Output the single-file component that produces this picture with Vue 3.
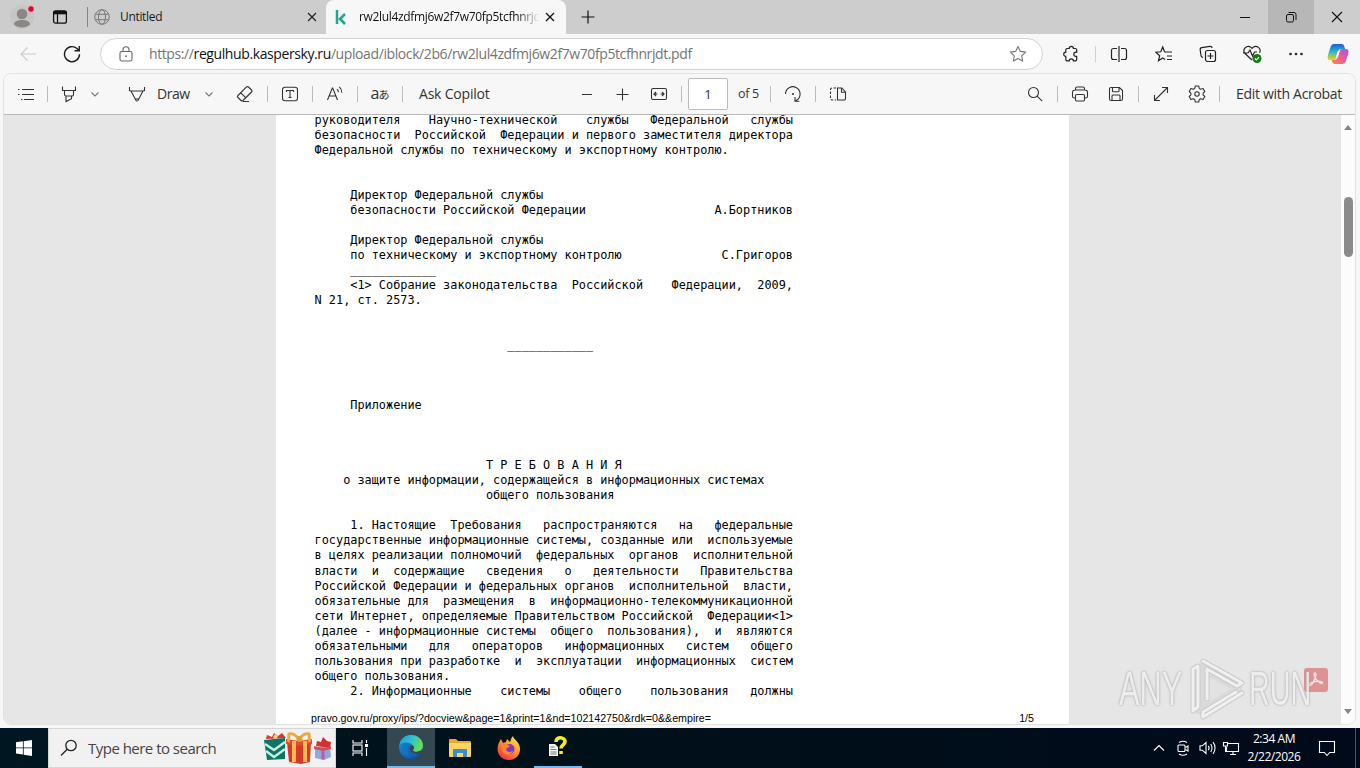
<template>
  <div class="screen">
    <header class="tabs">
      <div class="profile">
        <svg width="26" height="34" viewBox="0 0 26 34">
          <circle cx="13" cy="17" r="12" fill="#c8c6c4" />
          <circle cx="13" cy="14" r="5.3" fill="#8b8784" />
          <path d="M5 24.5c0-3 3-4.500 8-4.500s8 1.500 8 4.500c-2 2-5 3-8 3s-6-1-8-3z" fill="#8b8784" />
          <circle cx="22" cy="9" r="3.400" fill="#d3102b" stroke="#e6cfd1" />
        </svg>
      </div>
      <svg class="tab-actions" width="16" height="16" viewBox="0 0 16 16" fill="none" stroke="#111" stroke-width="1.300">
        <rect x="1.600" y="1.800" width="12.800" height="12.400" rx="2" />
        <path d="M1.600 3.600h12.800" stroke-width="3.400" />
        <path d="M5.500 4v10" />
      </svg>
      <i class="tab-line"></i>
      <div class="tab">
        <svg width="16" height="16" viewBox="0 0 16 16" fill="none" stroke="#777" stroke-width="1">
          <circle cx="8" cy="8" r="7.300" />
          <ellipse cx="8" cy="8" rx="3.500" ry="7.300" />
          <path d="M1.500 5.300h13M1.500 10.700h13" />
        </svg>
        <span class="tab-title first">Untitled</span>
        <svg class="close" width="10" height="10" viewBox="0 0 10 10"><path d="M1 1l8 8M9 1l-8 8" stroke="#222" stroke-width="1.200" /></svg>
      </div>
      <div class="tab active">
        <svg width="12" height="16" viewBox="0 0 12 16" fill="none" stroke="#1fa88f" stroke-width="2.500">
          <path d="M2 1v14M10 5L5 10l5 5M4 10h2" />
        </svg>
        <span class="tab-title second">rw2lul4zdfmj6w2f7w70fp5tcfhnrjdt.pdf</span>
        <svg class="close" width="10" height="10" viewBox="0 0 10 10"><path d="M1 1l8 8M9 1l-8 8" stroke="#111" stroke-width="1.300" /></svg>
      </div>
      <svg class="new-tab" width="14" height="14" viewBox="0 0 14 14"><path d="M7 .5v13M.5 7h13" stroke="#111" stroke-width="1.200" /></svg>
      <div class="window-buttons">
        <span><svg width="12" height="12" viewBox="0 0 12 12"><path d="M1 6.500h10" stroke="#111" /></svg></span>
        <span class="hover">
          <svg width="12" height="12" viewBox="0 0 12 12" fill="none" stroke="#111"><rect x="1.500" y="3.500" width="7" height="7.500" rx="1.500" /><path d="M3.500 1.500h5.500a2 2 0 0 1 2 2V9" /></svg>
        </span>
        <span><svg width="12" height="12" viewBox="0 0 12 12"><path d="M1 1l10 10M11 1L1 11" stroke="#111" stroke-width="1.100" /></svg></span>
      </div>
    </header>

    <nav class="address-row">
      <svg class="back" width="18" height="16" viewBox="0 0 18 16" fill="none" stroke="#ccc" stroke-width="1.200"><path d="M17 8H2M8.500 1.500L2 8l6.500 6.500" /></svg>
      <svg class="reload" width="18" height="18" viewBox="0 0 18 18" fill="none" stroke="#1d1d1d" stroke-width="1.400"><path d="M16.500 9.200A7.500 7.500 0 1 1 14 3.600L16 5.500M16.300 1v4.700h-4.800" /></svg>
      <div class="address">
        <svg width="14" height="16" viewBox="0 0 14 16" fill="none" stroke="#666" stroke-width="1.100">
          <rect x="1" y="5.500" width="12" height="9.500" rx="1.800" /><path d="M4 5.500V3.800a3 3 0 0 1 6 0v1.700" /><circle cx="7" cy="10.200" r=".9" fill="#666" stroke="none" />
        </svg>
        <span class="url">https://<b>regulhub.kaspersky.ru</b>/upload/iblock/2b6/rw2lul4zdfmj6w2f7w70fp5tcfhnrjdt.pdf</span>
        <svg class="star" width="18" height="18" viewBox="0 0 18 18" fill="none" stroke="#777" stroke-width="1.100"><path d="M9 1.500l2.300 4.900 5.300.7-3.900 3.700 1 5.300L9 13.500l-4.700 2.600 1-5.300-3.900-3.700 5.300-.7z" stroke-linejoin="round" /></svg>
      </div>
      <div class="browser-tools">
        <svg class="puzzle" width="18" height="18" viewBox="0 0 18 18"><path d="M5.300 3.500h1.900a2.100 2.100 0 0 1 4.200 0h1.800a1.500 1.500 0 0 1 1.500 1.500v2.200h-.8a2.100 2.100 0 0 0 0 4.200h.8v3a1.500 1.500 0 0 1-1.500 1.500h-1.800a2.100 2.100 0 0 0-4.200 0H5.300a1.500 1.500 0 0 1-1.500-1.500v-3a2.100 2.100 0 0 1 0-4.200V5a1.500 1.500 0 0 1 1.500-1.500z" /></svg>
        <i></i>
        <svg class="split" width="18" height="18" viewBox="0 0 18 18"><path d="M7 3.500H3.500a2 2 0 0 0-2 2v7a2 2 0 0 0 2 2H7M11 3.500h3.500a2 2 0 0 1 2 2v7a2 2 0 0 1-2 2H11M9 1v16" /></svg>
        <svg class="favs" width="18" height="18" viewBox="0 0 18 18"><path d="M10 7H17M12 11h5M12 14.500h5M9.500 6.800L7.700 2 5.800 6.800l-5 .4 3.900 3.500-1.200 5L7.700 13l2.400 1.500M9.500 7l1 .2" /></svg>
        <svg class="collections" width="18" height="18" viewBox="0 0 18 18"><rect x="6.500" y="5.500" width="10" height="11" rx="2" /><path d="M11.500 8v6M8.500 11h6M4 12.500l-1-.5a2 2 0 0 1-1-1.500L1.200 5a2 2 0 0 1 1.600-2.300L11 1.300c1-.1 1.800.4 2.200 1.700" /></svg>
        <svg class="health" width="20" height="20" viewBox="0 0 20 20"><path d="M10 16L3 9.500A4.300 4.300 0 0 1 9 3.400l1 1 1-1a4.300 4.300 0 0 1 6.500 5.400M1 9h5l2-3 2.500 6L12.500 8H15" /><circle cx="15" cy="14.500" r="4.500" fill="#107c10" stroke="none" /><path d="M12.900 14.500l1.500 1.500 2.700-2.900" stroke="#fff" /></svg>
        <svg class="dots" width="16" height="4" viewBox="0 0 16 4"><g fill="#222" stroke="none"><circle cx="2.500" cy="2" r="1.300" /><circle cx="8" cy="2" r="1.300" /><circle cx="13.500" cy="2" r="1.300" /></g></svg>
        <svg class="copilot" width="22" height="22" viewBox="0 0 22 22">
          <defs>
            <linearGradient id="cool" x1="0" y1="0" x2="0" y2="1"><stop offset="0" stop-color="#1b62d4" /><stop offset=".5" stop-color="#2cb7d0" /><stop offset=".8" stop-color="#a7cc45" /><stop offset="1" stop-color="#ffcc16" /></linearGradient>
            <linearGradient id="warm" x1="1" y1="0" x2="0" y2="1"><stop offset="0" stop-color="#a455e8" /><stop offset=".5" stop-color="#ed5c93" /><stop offset="1" stop-color="#fb8744" /></linearGradient>
          </defs>
          <g stroke="none">
            <path d="M8 1h7c2 0 2.500 3 3.200 5H14c-1.800 0-2.300 1-2.800 2.500L9 15c-.5 1.500-1 2-3 2H3c-3 0-2.500-3.500-1.600-6.500L3.500 4C4.500 1.500 5.500 1 8 1z" fill="url(#cool)" />
            <path d="M14 21H8c-2 0-2.700-2-3.500-4H7c2 0 2.700-.7 3.200-2.500L12.500 8c.5-1.500 1.500-2 3-2H19c3 0 2.800 3 1.900 6l-2 6c-1 2.500-2.500 3-4.900 3z" fill="url(#warm)" />
            <path d="M10.800 8h2l-1.900 6.500H8.800z" fill="#fff" />
          </g>
        </svg>
      </div>
    </nav>

    <main class="viewer">
      <div class="toolbar">
        <span class="tool first"><svg width="18" height="16" viewBox="0 0 18 16"><path d="M5 3.500h12M5 8.500h12M7 13.500h10M1 3.500h1.500M1 8.500h1.500M4 13.500h1.500" /></svg></span>
        <i class="sep narrow"></i>
        <span class="tool"><svg width="16" height="18" viewBox="0 0 16 18"><path d="M1.500 1.500v4h13v-4M3.500 5.500v4a1.500 1.500 0 0 0 1.500 1.500h6a1.500 1.500 0 0 0 1.500-1.500v-4M5 11v5.500l5.500-2.800V11" /></svg></span>
        <span class="chevron"><svg width="8" height="5" viewBox="0 0 8 5"><path d="M.5.5L4 4 7.500.5" /></svg></span>
        <span class="tool pen"><svg width="18" height="18" viewBox="0 0 18 18"><path d="M1.500 2v3.500l1.500.500h12l1.500-.5V2M3 6l5 9.500c.4.700 1.600.7 2 0L15 6M7.500 14h3" /></svg></span>
        <span class="label draw">Draw</span>
        <span class="chevron short"><svg width="8" height="5" viewBox="0 0 8 5"><path d="M.5.5L4 4 7.500.5" /></svg></span>
        <span class="tool eraser"><svg width="18" height="18" viewBox="0 0 18 18"><path d="M10.300 2.200L2 10.500c-.7.7-.7 1.300 0 2l3 3c.7.700 1.300.7 2 0l8.500-8.500c.7-.7.7-1.300 0-2l-3-3c-.7-.6-1.500-.6-2.200.2zM4.800 7.800l5.300 5.300M7 16.500h6" /></svg></span>
        <i class="sep"></i>
        <span class="tool"><svg width="18" height="16" viewBox="0 0 18 16"><rect x="1.500" y="1.200" width="15" height="13.500" rx="2.500" /><path d="M5.500 6V4.500h7V6M9 4.500v7M7.500 11.500h3" /></svg></span>
        <i class="sep"></i>
        <span class="tool"><svg width="18" height="18" viewBox="0 0 18 18"><path d="M1.500 15L6.300 3h.4l4.800 12M3.200 11h6.600M11 4.200c1 .8 1.400 1.800 1.400 3M13.200 1.800c1.800 1.500 2.600 3.400 2.600 5.900" /></svg></span>
        <i class="sep"></i>
        <span class="tool translate">a<small>あ</small></span>
        <i class="sep"></i>
        <span class="label ask">Ask Copilot</span>
        <span class="tool minus"><svg width="12" height="12" viewBox="0 0 12 12"><path d="M1 6.500h10" /></svg></span>
        <span class="tool plus"><svg width="13" height="13" viewBox="0 0 13 13"><path d="M.5 6.500h12M6.500.5v12" /></svg></span>
        <span class="tool fit"><svg width="18" height="14" viewBox="0 0 18 14"><rect x="1.500" y="1.500" width="15" height="11" rx="1.500" /><path d="M4 7h3.500M10.500 7H14M6 5L4 7l2 2M12 5l2 2-2 2" /></svg></span>
        <i class="sep slim"></i>
        <span class="page-input">1</span>
        <span class="label of">of 5</span>
        <i class="sep"></i>
        <span class="tool"><svg width="18" height="18" viewBox="0 0 18 18"><path d="M1.500 9a7.300 7.300 0 1 1 11 6.300l-1 .6M11 12v4.300h4.300" /><circle cx="9" cy="9" r="1.100" fill="#333" stroke="none" /></svg></span>
        <i class="sep"></i>
        <span class="tool"><svg width="18" height="16" viewBox="0 0 18 16"><path d="M8.500 2h4.300L16.500 6v6.500a1.500 1.500 0 0 1-1.500 1.500H8.500zM12.500 2v4.200h4" /><path d="M7 2H3a1.500 1.500 0 0 0-1.500 1.500v9A1.500 1.500 0 0 0 3 14h4" stroke-dasharray="2.500 1.500" /></svg></span>
        <span class="tool search"><svg width="16" height="16" viewBox="0 0 16 16"><circle cx="6.500" cy="6.500" r="5" /><path d="M10.200 10.200l5 5" /></svg></span>
        <i class="sep"></i>
        <span class="tool"><svg width="18" height="18" viewBox="0 0 18 18"><path d="M4.500 13H3.300a1.800 1.800 0 0 1-1.800-1.800V7.500A2.500 2.500 0 0 1 4 5h10a2.500 2.500 0 0 1 2.500 2.500v3.700a1.800 1.800 0 0 1-1.800 1.800h-1.200M4.500 5V3.500A1.500 1.500 0 0 1 6 2h6a1.500 1.500 0 0 1 1.500 1.500V5" /><rect x="4.500" y="9.500" width="9" height="6.500" rx="1.200" /></svg></span>
        <span class="tool gap"><svg width="16" height="16" viewBox="0 0 16 16"><path d="M3 1.500h8.500l3 3V13a1.500 1.500 0 0 1-1.500 1.500H3A1.500 1.500 0 0 1 1.500 13V3A1.500 1.500 0 0 1 3 1.500zM4.500 1.500V5a.8.8 0 0 0 .8.800h4.900A.8.8 0 0 0 11 5V1.500M4 14.500V10a1 1 0 0 1 1-1h6a1 1 0 0 1 1 1v4.500" /></svg></span>
        <i class="sep"></i>
        <span class="tool"><svg width="16" height="16" viewBox="0 0 16 16"><path d="M1.500 14.500l13-13M9 1.500h5.500V7M1.500 9v5.500H7" /></svg></span>
        <span class="tool gap"><svg width="18" height="18" viewBox="0 0 18 18"><path d="M7.300 1h3.400l.6 2.400 1.400.8 2.400-.7 1.700 3L15.100 8.200v1.600l1.700 1.700-1.700 3-2.400-.7-1.400.8-.6 2.400H7.300l-.6-2.400-1.400-.8-2.400.7-1.700-3 1.700-1.700V8.200L1.200 6.500l1.700-3 2.400.7 1.400-.8z" stroke-linejoin="round" /><circle cx="9" cy="9" r="2.200" /></svg></span>
        <i class="sep"></i>
        <span class="label edit">Edit with Acrobat</span>
      </div>
      <div class="document">
        <div class="canvas">
          <article class="page">
            <pre>{{ pageText }}</pre>
            <footer><span>pravo.gov.ru/proxy/ips/?docview&amp;page=1&amp;print=1&amp;nd=102142750&amp;rdk=0&amp;&amp;empire=</span><span>1/5</span></footer>
          </article>
        </div>
        <div class="scrollbar"><i class="up"></i><b></b><i class="down"></i></div>
      </div>
      <div class="acrobat"><svg width="20" height="20" viewBox="0 0 20 20" fill="none" stroke="#f7e3e3" stroke-width="1.400"><path d="M9 3c2 0 .5 5-1.500 9-2 3.500-4.500 4.500-4.500 3s4-3.500 8-3.700 6 .4 5.500 1.600-4-.4-6-3.200S7 3 9 3z" /></svg></div>
      <div class="watermark">
        <span>ANY</span>
        <svg width="56" height="64" viewBox="0 0 56 64" fill="none" stroke-linejoin="round" stroke-linecap="round">
          <path d="M14 3l39 22v10L14 59l-10-6V11z" fill="#d9d9d9" />
          <path d="M18 18l24 13-24 14z" fill="#e2e2e2" />
          <g stroke="#c6c6c6" stroke-width="5"><path d="M14 3l39 22-5 3-30-17v30" /><path d="M53 35L14 59v-5l33-20" /><path d="M9 8L4 11v42l5-4z" /></g>
          <g stroke="#f2f2f2" stroke-width="3"><path d="M14 3l39 22-5 3-30-17v30" /><path d="M53 35L14 59v-5l33-20" /><path d="M9 8L4 11v42l5-4z" /></g>
        </svg>
        <span class="run">RUN</span>
      </div>
    </main>

    <footer class="taskbar">
      <span class="start"><svg width="16" height="16" viewBox="0 0 16 16" fill="#fff"><path d="M0 2.300l6.900-1v6.200H0zM7.700 1.200L16 0v7.500H7.700zM0 8.300h6.900v6.300L0 13.600zM7.700 8.300H16V16l-8.300-1.200z" /></svg></span>
      <div class="search-box">
        <svg width="18" height="18" viewBox="0 0 18 18" fill="none" stroke="#222" stroke-width="1.300"><circle cx="11" cy="6.500" r="5.200" /><path d="M7.200 10.300L1 16.500" /></svg>
        <span>Type here to search</span>
        <svg class="gifts" width="70" height="36" viewBox="0 0 70 36">
          <path d="M3 9l1-4 5 2 2-4 4 3 4-3 4 5z" fill="#d53a31" />
          <path d="M10 7l2-3 3 2-2 4z" fill="#f0d27b" />
          <path d="M1 10l21-2v21L4 30z" fill="#0e7468" />
          <path d="M2 14l9 6 11-8M3 21l8 6 11-8" stroke="#c9f1df" stroke-width="2.300" fill="none" />
          <path d="M53 16l1-5 4 1 2-5 4 4 4 1-1 6z" fill="#cf3135" />
          <path d="M52 17h15l1 10-7 3-9-2z" fill="#8fa9dc" /><path d="M51 16l9 2 8-2v3l-8 2-9-2z" fill="#cc514f" /><path d="M58.500 20h3v9.500h-3z" fill="#c8549a" />
          <path d="M24 12l24-1-1 21-9 2-12-2z" fill="#d3382a" /><path d="M23 9l13 2 13-2v5l-13 2-13-2z" fill="#e24a32" /><path d="M29 11h4v21h-4zM40 11h4v21h-4z" fill="#f4bc4e" />
          <path d="M36 10c-2-5-7-7-10-6-1 2 1 5-1 8M36 10c2-5 7-7 10-6 1 2-1 5 1 8" fill="none" stroke="#e8ab42" stroke-width="3" />
          <circle cx="36.500" cy="9" r="3" fill="#dda03a" />
        </svg>
      </div>
      <span class="task"><svg width="18" height="16" viewBox="0 0 18 16" fill="none" stroke="#fff" stroke-width="1.100"><path d="M2 0v3h9V0M2 16v-3h9v3" /><rect x="2" y="5" width="9" height="6" /><path d="M15.500 0v3M15.500 8v8" /><path d="M14.500 4.500h2v2h-2z" fill="#fff" /></svg></span>
      <span class="task current">
        <svg width="24" height="24" viewBox="0 0 24 24">
          <defs>
            <linearGradient id="wave" x1="0" y1="0" x2="1" y2=".3"><stop offset="0" stop-color="#2194df" /><stop offset=".55" stop-color="#2fc2cd" /><stop offset="1" stop-color="#67dd55" /></linearGradient>
            <linearGradient id="sea" x1="0" y1="0" x2=".8" y2="1"><stop offset="0" stop-color="#1d9be6" /><stop offset="1" stop-color="#0c4c9d" /></linearGradient>
          </defs>
          <circle cx="12" cy="12" r="12" fill="url(#sea)" />
          <path d="M.5 10C1.500 4 6 0 12 0c7 0 12 5 12 10.500 0 4-3 6.500-6.500 6.500-2.500 0-4-1-3.500-2 1-1.500 1-2.500.5-3.500C13 8 8 6.500 4 8 2 8.700 1 9.500.5 10z" fill="url(#wave)" />
          <path d="M9 12c1-1.800 3-2.500 5.300-1 .7 1.500.5 2.500-.3 4-.5 1 1 2 3.500 2 2 0 3.500-.5 4.800-1.500C20 20 17 21.500 14 20.500 10 19.500 7.500 15 9 12z" fill="#1b62b4" />
          <path d="M11 12c1-1.500 2.500-1.800 3.500-.8.5 1.500.3 2.500-.5 3.800-.4 1 .8 1.900 2.800 2.100l5.500-1.600 1.200.3-1.500 2.700c-2.500 1-6 .8-8.500-.8-2.200-1.500-3.300-3.700-2.500-5.700z" fill="#33474f" />
          <path d="M3 9c5-2 9 0 9 1-4 0-6 6-1 11-5-1-9-6-8-12z" fill="#1474c4" />
        </svg>
      </span>
      <span class="task"><svg width="22" height="20" viewBox="0 0 22 20"><path d="M0 2q0-1 1-1h6l2 2h12q1 0 1 1v14H0z" fill="#e9a92c" /><path d="M0 5h22v13q0 1-1 1H1q-1 0-1-1z" fill="#fbd467" /><path d="M4 19v-7q0-1 1-1h12q1 0 1 1v7h-4v-4H8v4z" fill="#3c8ec9" /></svg></span>
      <span class="task"><svg width="24" height="24" viewBox="0 0 24 24">
        <defs><linearGradient id="fire" x1=".9" y1="0" x2=".2" y2="1"><stop offset="0" stop-color="#fff04d" /><stop offset=".45" stop-color="#ff9a27" /><stop offset="1" stop-color="#ed294f" /></linearGradient></defs>
        <path d="M4 3l2 4 3-1 1-3 3 3c1-2 1-4 3-6 0 3 6 5 7 12 .5 6-4 12-11 12S.5 19 .5 13C.5 9 2 6 4 3z" fill="url(#fire)" /><circle cx="12.500" cy="13" r="5" fill="#7a37c9" /><path d="M5 8c4-1 5 1 8 2-1 2-3 1-4 3 1 4 5 3 7 2-2 5-10 5-11-1z" fill="#ff8330" />
      </svg></span>
      <span class="task running"><svg width="20" height="22" viewBox="0 0 20 22"><path d="M8 6c0-6 9-5 9-.5 0 3.500-4 3.300-4 7M13 15v3" fill="none" stroke="#f7ee19" stroke-width="3.600" /><path d="M1 8h6l3 3v9H1z" fill="#f4f4f4" /><path d="M2.500 11h4M2.500 13.500h6M2.500 16h6M2.500 18h6" stroke="#777" /></svg></span>
      <div class="tray">
        <svg class="caret" width="12" height="8" viewBox="0 0 12 8"><path d="M1 6.500l5-5 5 5" /></svg>
        <svg class="meet" width="14" height="16" viewBox="0 0 14 16"><rect x="2" y="5" width="7" height="6.500" rx="1" /><path d="M9.500 7.500l2.500-1.500v5L9.500 9.500M3 2.500c2.300-1.500 5.700-1.500 8 0M3 14c2.300 1.500 5.700 1.500 8 0" /></svg>
        <svg class="sound" width="18" height="14" viewBox="0 0 18 14"><path d="M1 4.800h2.300L7 1.500v11L3.300 9.200H1zM9.300 4.800c.9 1.200.9 3.200 0 4.400M11.700 3c1.700 2.200 1.700 5.800 0 8M14 1.200c2.700 3.200 2.700 8.400 0 11.600" /></svg>
        <svg class="network" width="18" height="15" viewBox="0 0 18 15"><path d="M5.500 2.500h11v8H4.500V6M8 13.500h6M11 10.500v3M1.500 1.500h4v3.500h-4zM3.500 5v6" /></svg>
        <div class="clock"><span>2:34 AM</span><span>2/22/2026</span></div>
        <svg class="notice" width="18" height="17" viewBox="0 0 18 17"><path d="M1.500 1.500h15v11h-4.800L9 15.500l-2.700-3H1.500z" /></svg>
        <i></i>
      </div>
    </footer>
  </div>
</template>

<script setup>
// Every row is laid out on a 67 column grid
const pageText = [
  'руководителя    Научно-технической    службы   Федеральной   службы',
  'безопасности  Российской  Федерации и первого заместителя директора',
  'Федеральной службы по техническому и экспортному контролю.',
  '',
  '',
  '     Директор Федеральной службы',
  '     безопасности Российской Федерации' + 'А.Бортников'.padStart(29),
  '',
  '     Директор Федеральной службы',
  '     по техническому и экспортному контролю' + 'С.Григоров'.padStart(24),
  '     ____________',
  '     <1> Собрание законодательства  Российской    Федерации,  2009,',
  'N 21, ст. 2573.',
  '',
  '',
  '_'.repeat(12).padStart(39),
  '',
  '',
  '',
  '     Приложение',
  '',
  '',
  '',
  'Т Р Е Б О В А Н И Я'.padStart(43),
  '    о защите информации, содержащейся в информационных системах',
  'общего пользования'.padStart(42),
  '',
  '     1. Настоящие  Требования   распространяются   на   федеральные',
  'государственные информационные системы, созданные или  используемые',
  'в целях реализации полномочий  федеральных  органов  исполнительной',
  'власти  и  содержащие   сведения   о   деятельности   Правительства',
  'Российской Федерации и федеральных органов  исполнительной  власти,',
  'обязательные для  размещения  в  информационно-телекоммуникационной',
  'сети Интернет, определяемые Правительством Российской  Федерации<1>',
  '(далее - информационные системы  общего  пользования),  и  являются',
  'обязательными   для   операторов   информационных   систем   общего',
  'пользования при разработке  и  эксплуатации  информационных  систем',
  'общего пользования.',
  '     2. Информационные    системы    общего    пользования   должны'
].join('\n')
</script>

<style>
body {
  margin: 0;
  overflow: hidden;
}
</style>

<style scoped>
.screen {
  width: 1360px;
  height: 768px;
  display: flex;
  flex-direction: column;
  background: #f7f7f7;
  font-family: "Open Sans", "Noto Sans", sans-serif;
  font-size: 12px;
  color: #1b1b1b;
  overflow: hidden;
  white-space: nowrap;
}

svg {
  display: block;
  flex: none;
}

/* Tab strip */
.tabs {
  height: 34px;
  flex: none;
  display: flex;
  align-items: center;
  background: #cdcdcd;
}

.profile {
  margin-left: 9px;
}

.tab-actions {
  margin-left: 17px;
}

.tab-line {
  width: 1px;
  height: 20px;
  margin-left: 19px;
  background: #858585;
}

.tab {
  width: 238px;
  height: 34px;
  display: flex;
  align-items: center;
  padding-left: 6px;
  box-sizing: border-box;
}

.tab-title {
  overflow: hidden;
  line-height: 18px;
  padding-bottom: 1px;
}

.tab-title.first {
  width: 186px;
  margin-left: 10px;
  letter-spacing: -0.33px;
}

.tab-title.second {
  width: 179px;
  margin-left: 12px;
  color: #111;
  letter-spacing: -0.33px;
  mask-image: linear-gradient(to right, #000 158px, transparent 181px);
}

.tab .close {
  margin-left: 1px;
}

.tab.active {
  width: 240px;
  padding-left: 9px;
  background: #f7f7f7;
  border-radius: 8px 8px 0 0;
}

.tab.active .close {
  margin-left: 7px;
}

.new-tab {
  margin-left: 15px;
}

.window-buttons {
  display: flex;
  margin-left: auto;
}

.window-buttons span {
  width: 46px;
  height: 34px;
  display: flex;
  align-items: center;
  justify-content: center;
}

.window-buttons .hover {
  background: #b7b7b7;
}

/* Address bar */
.address-row {
  height: 39px;
  flex: none;
  display: flex;
  align-items: center;
}

.back {
  margin-left: 19px;
}

.reload {
  margin-left: 26px;
}

.address {
  width: 943px;
  height: 32px;
  margin-left: 19px;
  display: flex;
  align-items: center;
  box-sizing: border-box;
  padding: 0 15px 0 18px;
  border: 1px solid #d2d2d2;
  border-radius: 16px;
  background: #fff;
}

.url {
  margin-left: 16px;
  font-size: 14px;
  color: #747474;
  letter-spacing: -0.4px;
}

.url b {
  font-weight: 400;
  color: #111;
}

.star {
  margin-left: auto;
}

.browser-tools {
  display: flex;
  align-items: center;
}

.browser-tools svg {
  fill: none;
  stroke: #222;
  stroke-width: 1.2;
}

.browser-tools i {
  width: 1px;
  height: 16px;
  margin-left: 15px;
  background: #d0d0d0;
}

.puzzle {
  margin-left: 19px;
}

.split {
  margin-left: 14px;
}

.favs {
  margin-left: 27px;
}

.collections {
  margin-left: 26px;
}

.health {
  margin-left: 25px;
}

.dots {
  margin-left: 26px;
}

.copilot {
  margin-left: 23px;
}

/* PDF viewer */
.viewer {
  position: relative;
  width: 1353px;
  height: 652px;
  flex: none;
  margin-left: 3px;
  box-sizing: border-box;
  border: 1px solid #e2e2e2;
  border-radius: 8px;
  overflow: hidden;
}

.toolbar {
  height: 40px;
  display: flex;
  align-items: center;
  border-bottom: 1px solid #b9b9b9;
  background: #f7f7f7;
  font-size: 14px;
  color: #333;
}

.tool {
  width: 30px;
  flex: none;
  display: flex;
  justify-content: center;
  align-items: center;
}

.tool svg,
.chevron svg {
  fill: none;
  stroke: #333;
  stroke-width: 1.1;
}

.tool.first {
  margin-left: 7px;
}

.sep {
  width: 15px;
  height: 16px;
  flex: none;
  background: linear-gradient(#bbb, #bbb) center / 1px 100% no-repeat;
}

.sep.narrow {
  width: 13px;
}

.sep.slim {
  width: 14px;
}

.chevron {
  width: 22px;
  flex: none;
  display: flex;
  justify-content: center;
}

.chevron.short {
  width: 20px;
}

.chevron svg {
  stroke: #777;
}

.pen {
  margin-left: 16px;
}

.label {
  flex: none;
  padding-bottom: 1px;
}

.draw {
  width: 42px;
  margin-left: 5px;
  letter-spacing: -0.5px;
}

.eraser {
  margin-left: 11px;
}

.translate {
  font-size: 16px;
  line-height: 16px;
  padding-bottom: 2px;
}

.translate small {
  font: 11px "Noto Sans CJK JP", sans-serif;
  line-height: 16px;
  padding-top: 2px;
  margin-left: -1px;
}

.ask {
  width: 80px;
  margin-left: 9px;
  letter-spacing: -0.2px;
}

.minus {
  margin-left: 73px;
}

.plus {
  margin-left: 5px;
}

.fit {
  margin-left: 7px;
}

.page-input {
  width: 40px;
  height: 32px;
  flex: none;
  box-sizing: border-box;
  border: 1px solid #bcbcbc;
  border-radius: 2px;
  background: #fff;
  font-size: 13px;
  line-height: 31px;
  text-align: center;
}

.of {
  width: 25px;
  margin-left: 10px;
  font-size: 12.5px;
  letter-spacing: -0.3px;
}

.search {
  margin-left: 167px;
}

.gap {
  margin-left: 6px;
}

.edit {
  margin-left: 9px;
  letter-spacing: -0.3px;
}

.document {
  height: 609px;
  display: flex;
}

.canvas {
  width: 1337px;
  background: #e6e6e6;
  overflow: hidden;
}

.page {
  width: 793px;
  height: 609px;
  margin-left: 272px;
  background: #fff;
  display: flex;
  flex-direction: column;
}

.page pre {
  height: 599px;
  flex: none;
  margin: -2.44px 0 0 38.6px;
  font: 11.86px/15.03px "DejaVu Sans Mono", monospace;
  color: #000;
}

.page footer {
  display: flex;
  justify-content: space-between;
  padding: 0 35px;
  font: 10.67px/13px "Liberation Sans", Arial, sans-serif;
  color: #000;
}

.scrollbar {
  flex: 1;
  display: flex;
  flex-direction: column;
  align-items: center;
  background: #fcfcfc;
}

.scrollbar b {
  width: 9px;
  height: 60px;
  margin-top: 67px;
  border-radius: 5px;
  background: #8b8b8b;
}

.scrollbar i {
  border: 4.5px solid transparent;
}

.scrollbar .up {
  margin-top: 10px;
  border-top: 0;
  border-bottom: 5px solid #858585;
}

.scrollbar .down {
  margin: auto 0 10px;
  border-bottom: 0;
  border-top: 5px solid #858585;
}

.watermark {
  position: absolute;
  left: 1115px;
  top: 582px;
  display: flex;
  align-items: center;
  font: 48px/64px "Liberation Sans", Arial, sans-serif;
  color: #efefef;
  text-shadow: 0 0 3px #999, 0 0 2px #bbb;
  opacity: 0.85;
}

.watermark span {
  width: 62px;
  transform: scaleX(0.64);
  transform-origin: left;
}

.watermark .run {
  transform: scaleX(0.6);
}

.watermark svg {
  margin: 2px 4px 0 8px;
}

.acrobat {
  position: absolute;
  left: 1300px;
  top: 594px;
  width: 24px;
  height: 24px;
  display: flex;
  align-items: center;
  justify-content: center;
  border-radius: 3px;
  background: #dc7f7f;
  opacity: 0.8;
}

/* Windows taskbar */
.taskbar {
  height: 40px;
  margin-top: auto;
  flex: none;
  display: flex;
  align-items: stretch;
  background: linear-gradient(to right, #001722, #001019 45%, #010a1b);
}

.start {
  width: 48px;
  display: flex;
  align-items: center;
  justify-content: center;
}

.search-box {
  width: 288px;
  box-sizing: border-box;
  display: flex;
  align-items: center;
  padding-left: 11px;
  border: 1px solid #d6d6d6;
  background: #f1f1f1;
  font-size: 15px;
  color: #444;
}

.search-box span {
  width: 165px;
  margin-left: 10px;
  letter-spacing: -0.52px;
}

.gifts {
  margin-left: 10px;
}

.task {
  width: 48px;
  margin-right: 1px;
  box-sizing: border-box;
  display: flex;
  align-items: center;
  justify-content: center;
}

.task + .task {
  margin-left: 0;
}

.task.current {
  margin-left: 2px;
  background: #334850;
}

.task.current,
.task.running {
  border-bottom: 2px solid #76b9ed;
}

.tray {
  margin-left: auto;
  display: flex;
  align-items: center;
}

.tray svg {
  fill: none;
  stroke: #fff;
  stroke-width: 1.1;
}

.meet {
  margin-left: 11px;
}

.sound {
  margin-left: 9px;
}

.network {
  margin-left: 5px;
}

.clock {
  width: 62px;
  margin-left: 3px;
  display: flex;
  flex-direction: column;
  align-items: center;
  font-size: 12px;
  line-height: 18px;
  letter-spacing: -0.45px;
  color: #fff;
}

.notice {
  margin-left: 13px;
}

.tray i {
  width: 1px;
  height: 40px;
  margin: 0 4px 0 19px;
  background: #4c5461;
}
</style>
